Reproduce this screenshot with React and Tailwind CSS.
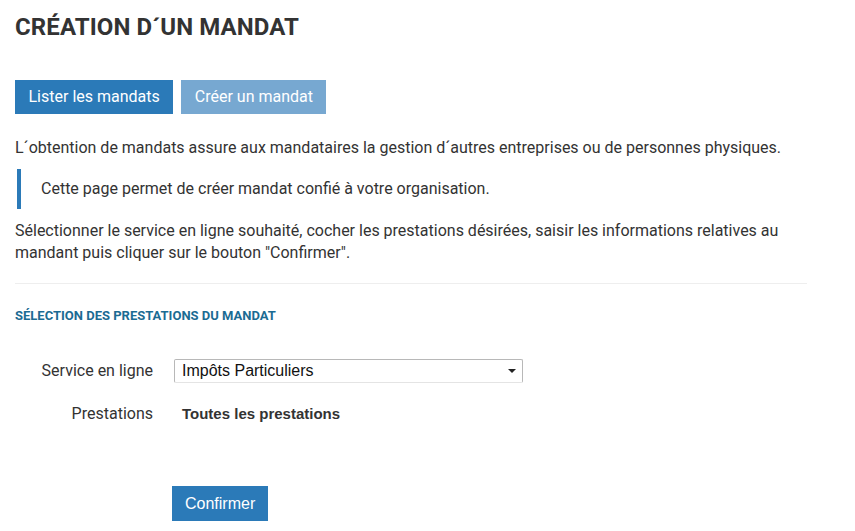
export default function App() {
  return (
    <div className="min-h-[531px] bg-white font-['Roboto',sans-serif] text-[#333]">
      <div className="w-[792px] ml-[15px] pt-[13px]">
        <h1 className="text-[24px] font-bold leading-[28px] tracking-[0.1px]">CRÉATION D´UN MANDAT</h1>

        <div className="flex gap-[8px] mt-[39px]">
          <button className="h-[34px] px-[13.5px] bg-[#2b7ab8] text-white text-[16px]">Lister les mandats</button>
          <button className="h-[34px] px-[13.5px] bg-[#77a8d1] text-white text-[16px]">Créer un mandat</button>
        </div>

        <p className="mt-[23px] text-[16px] leading-[22px]">
          L´obtention de mandats assure aux mandataires la gestion d´autres entreprises ou de personnes physiques.
        </p>

        <div className="mt-[10px] ml-[2px] border-l-[4px] border-[#2b7ab8] py-[9px] pl-[20px] text-[16px] leading-[22px]">
          Cette page permet de créer mandat confié à votre organisation.
        </div>

        <p className="mt-[11px] text-[16px] leading-[22px]">
          Sélectionner le service en ligne souhaité, cocher les prestations désirées, saisir les informations relatives au mandant puis cliquer sur le bouton "Confirmer".
        </p>

        <hr className="mt-[19px] border-t border-[#eeeeee]" />

        <h2 className="mt-[24px] text-[13px] font-bold leading-[16px] text-[#1b6b93]">SÉLECTION DES PRESTATIONS DU MANDAT</h2>

        <div className="mt-[35px] flex flex-col gap-[20px]">
          <div className="flex items-center">
            <label className="w-[138px] text-right text-[16px] leading-[22px]">Service en ligne</label>
            <div className="ml-[21px] w-[349px] h-[24px] border border-[#b8b8b8] border-b-[#e4e4e4] rounded-[2px] flex items-center justify-between pl-[7px] pr-[6px] font-['Liberation_Sans',sans-serif] text-[16px] text-[#111]">
              <span>Impôts Particuliers</span>
              <svg width="8" height="4" viewBox="0 0 8 4"><path d="M0 0h8L4 4z" fill="#222" /></svg>
            </div>
          </div>
          <div className="flex items-center">
            <span className="w-[138px] text-right text-[16px] leading-[22px]">Prestations</span>
            <span className="ml-[29px] font-['Liberation_Sans',sans-serif] font-bold text-[15px] leading-[22px]">Toutes les prestations</span>
          </div>
        </div>

        <button className="mt-[61px] ml-[157px] h-[35px] px-[13px] bg-[#2b7ab8] text-white font-['Liberation_Sans',sans-serif] text-[16px]">Confirmer</button>
      </div>
    </div>
  );
}
